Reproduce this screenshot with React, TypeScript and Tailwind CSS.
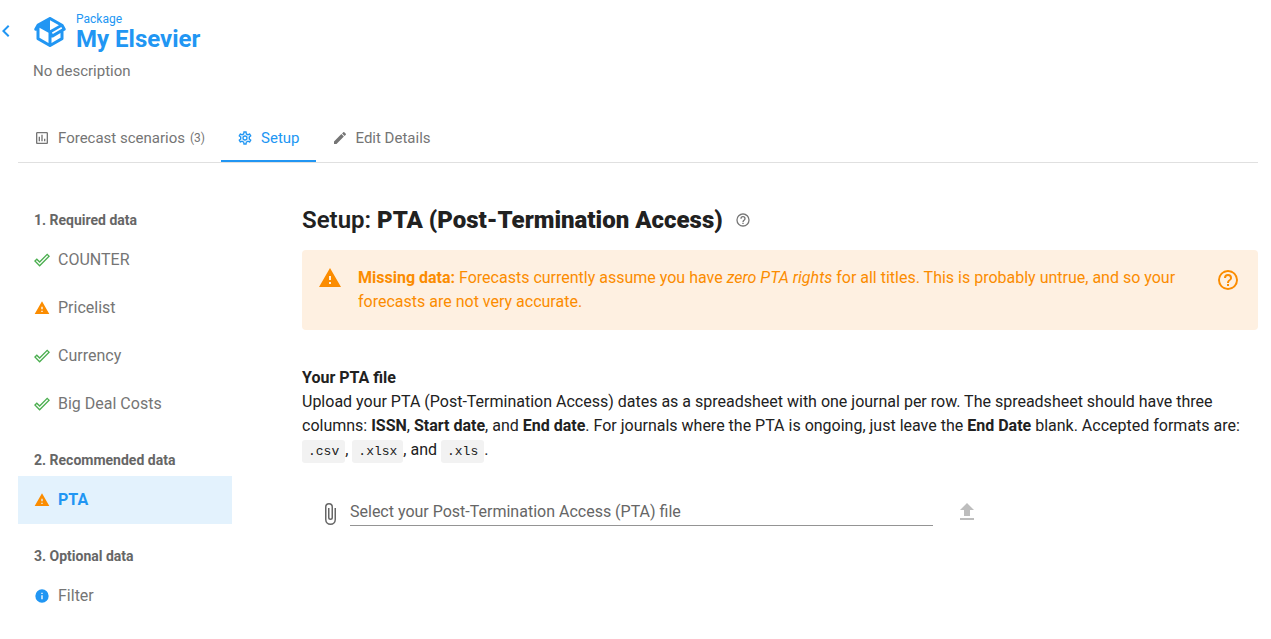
import type { ReactNode } from "react";

const icons = {
  chevronLeft: "M15.41,16.58L10.83,12L15.41,7.41L14,6L8,12L14,18L15.41,16.58Z",
  package:
    "M2,10.96C1.5,10.68 1.35,10.07 1.63,9.59L3.13,7C3.24,6.8 3.41,6.66 3.6,6.58L11.43,2.18C11.59,2.06 11.79,2 12,2C12.21,2 12.41,2.06 12.57,2.18L20.47,6.62C20.66,6.72 20.82,6.88 20.91,7.08L22.36,9.6C22.64,10.08 22.47,10.69 22,10.96L21,11.54V16.5C21,16.88 20.79,17.21 20.47,17.38L12.57,21.82C12.41,21.94 12.21,22 12,22C11.79,22 11.59,21.94 11.43,21.82L3.53,17.38C3.21,17.21 3,16.88 3,16.5V10.96C2.7,11.13 2.32,11.14 2,10.96M12,4.15V4.15L12,10.85V10.85L17.96,7.5L12,4.15M5,15.91L11,19.29V12.58L5,9.21V15.91M19,15.91V12.69L14,15.59C13.67,15.77 13.3,15.76 13,15.6V19.29L19,15.91M13.85,13.36L20.13,9.73L19.55,8.72L13.27,12.35L13.85,13.36Z",
  chart:
    "M9 17H7V10H9V17M13 17H11V7H13V17M17 17H15V13H17V17M19 19H5V5H19V19.1M19 3H5C3.9 3 3 3.9 3 5V19C3 20.1 3.9 21 5 21H19C20.1 21 21 20.1 21 19V5C21 3.9 20.1 3 19 3Z",
  cog: "M12,8A4,4 0 0,1 16,12A4,4 0 0,1 12,16A4,4 0 0,1 8,12A4,4 0 0,1 12,8M12,10A2,2 0 0,0 10,12A2,2 0 0,0 12,14A2,2 0 0,0 14,12A2,2 0 0,0 12,10M10,22C9.75,22 9.54,21.82 9.5,21.58L9.13,18.93C8.5,18.68 7.96,18.34 7.44,17.94L4.95,18.95C4.73,19.03 4.46,18.95 4.34,18.73L2.34,15.27C2.21,15.05 2.27,14.78 2.46,14.63L4.57,12.97L4.5,12L4.57,11L2.46,9.37C2.27,9.22 2.21,8.95 2.34,8.73L4.34,5.27C4.46,5.05 4.73,4.96 4.95,5.05L7.44,6.05C7.96,5.66 8.5,5.32 9.13,5.07L9.5,2.42C9.54,2.18 9.75,2 10,2H14C14.25,2 14.46,2.18 14.5,2.42L14.87,5.07C15.5,5.32 16.04,5.66 16.56,6.05L19.05,5.05C19.27,4.96 19.54,5.05 19.66,5.27L21.66,8.73C21.79,8.95 21.73,9.22 21.54,9.37L19.43,11L19.5,12L19.43,13L21.54,14.63C21.73,14.78 21.79,15.05 21.66,15.27L19.66,18.73C19.54,18.95 19.27,19.04 19.05,18.95L16.56,17.95C16.04,18.34 15.5,18.68 14.87,18.93L14.5,21.58C14.46,21.82 14.25,22 14,22H10M11.25,4L10.88,6.61C9.68,6.86 8.62,7.5 7.85,8.39L5.44,7.35L4.69,8.65L6.8,10.2C6.4,11.37 6.4,12.64 6.8,13.8L4.68,15.36L5.43,16.66L7.86,15.62C8.63,16.5 9.68,17.14 10.87,17.38L11.24,20H12.76L13.13,17.39C14.32,17.14 15.37,16.5 16.14,15.62L18.57,16.66L19.32,15.36L17.2,13.81C17.6,12.64 17.6,11.37 17.2,10.2L19.31,8.65L18.56,7.35L16.15,8.39C15.38,7.5 14.32,6.86 13.12,6.62L12.75,4H11.25Z",
  pencil:
    "M20.71,7.04C21.1,6.65 21.1,6 20.71,5.63L18.37,3.29C18,2.9 17.35,2.9 16.96,3.29L15.12,5.12L18.87,8.87M3,17.25V21H6.75L17.81,9.93L14.06,6.18L3,17.25Z",
  check:
    "M19.78,2.2L24,6.42L8.44,22L0,13.55L4.22,9.33L8.44,13.55L19.78,2.2M19.78,5L8.44,16.36L4.22,12.19L2.81,13.55L8.44,19.17L21.19,6.42L19.78,5Z",
  alert: "M13,14H11V10H13M13,18H11V16H13M1,21H23L12,2L1,21Z",
  info: "M13,9H11V7H13M13,17H11V11H13M12,2A10,10 0 0,0 2,12A10,10 0 0,0 12,22A10,10 0 0,0 22,12A10,10 0 0,0 12,2Z",
  help: "M11,18H13V16H11V18M12,2A10,10 0 0,0 2,12A10,10 0 0,0 12,22A10,10 0 0,0 22,12A10,10 0 0,0 12,2M12,20C7.59,20 4,16.41 4,12C4,7.59 7.59,4 12,4C16.41,4 20,7.59 20,12C20,16.41 16.41,20 12,20M12,6A4,4 0 0,0 8,10H10A2,2 0 0,1 12,8A2,2 0 0,1 14,10C14,12 11,11.75 11,15H13C13,12.75 16,12.5 16,10A4,4 0 0,0 12,6Z",
  paperclip:
    "M16.5,6V17.5A4,4 0 0,1 12.5,21.5A4,4 0 0,1 8.5,17.5V5A2.5,2.5 0 0,1 11,2.5A2.5,2.5 0 0,1 13.5,5V15.5A1,1 0 0,1 12.5,16.5A1,1 0 0,1 11.5,15.5V6H10V15.5A2.5,2.5 0 0,0 12.5,18A2.5,2.5 0 0,0 15,15.5V5A4,4 0 0,0 11,1A4,4 0 0,0 7,5V17.5A5.5,5.5 0 0,0 12.5,23A5.5,5.5 0 0,0 18,17.5V6H16.5Z",
  upload: "M9,16V10H5L12,3L19,10H15V16H9M5,20V18H19V20H5Z",
};

type IconName = keyof typeof icons;

function Icon({ name, className }: { name: IconName; className: string }) {
  return (
    <svg viewBox="0 0 24 24" fill="currentColor" aria-hidden="true" className={`shrink-0 ${className}`}>
      <path d={icons[name]} />
    </svg>
  );
}

function Tab({ icon, active, children }: { icon: IconName; active?: boolean; children: ReactNode }) {
  return (
    <button
      type="button"
      role="tab"
      aria-selected={!!active}
      className={`flex h-12 items-center border-b-2 px-4 pt-0.5 text-[15px] ${
        active ? "border-[#2196f3] text-[#2196f3]" : "border-transparent text-[#757575]"
      }`}
    >
      <Icon name={icon} className="mr-2 size-4" />
      {children}
    </button>
  );
}

type Item = { label: string; icon: IconName; active?: boolean };

const groups: { title: string; items: Item[] }[] = [
  {
    title: "1. Required data",
    items: [
      { label: "COUNTER", icon: "check" },
      { label: "Pricelist", icon: "alert" },
      { label: "Currency", icon: "check" },
      { label: "Big Deal Costs", icon: "check" },
    ],
  },
  { title: "2. Recommended data", items: [{ label: "PTA", icon: "alert", active: true }] },
  { title: "3. Optional data", items: [{ label: "Filter", icon: "info" }] },
];

const iconColor: Partial<Record<IconName, string>> = {
  check: "text-[#4caf50]",
  alert: "text-[#fb8c00]",
  info: "text-[#2196f3]",
};

function Code({ children }: { children: ReactNode }) {
  return (
    <code className="rounded-[3px] bg-[#f2f2f2] px-1.5 py-1 font-['Liberation_Mono',monospace] text-[13px]">
      {children}
    </code>
  );
}

export default function App() {
  return (
    <div className="min-h-screen bg-white pr-[13px] pb-4 font-[Roboto,sans-serif] text-[#212121]">
      <header className="flex">
        <a href="#packages" aria-label="Back" className="-ml-1.5 flex pt-[19px] text-[#2196f3]">
          <Icon name="chevronLeft" className="size-6" />
        </a>
        <div className="pl-3.5">
          <div className="flex pt-3 text-[#2196f3]">
            <Icon name="package" className="mt-0.5 mr-2 size-9" />
            <div>
              <div className="text-[12px] leading-[14px]">Package</div>
              <h1 className="text-2xl leading-[26px] font-bold">My Elsevier</h1>
            </div>
          </div>
          <p className="mt-2 pl-px text-[15px] leading-[22px] text-[#757575]">No description</p>
        </div>
      </header>

      <div className="pl-[18px]">
        <div role="tablist" className="mt-8 flex border-b border-[#e0e0e0]">
          <Tab icon="chart">
            Forecast scenarios <span className="ml-[5px] text-[12px]">(3)</span>
          </Tab>
          <Tab icon="cog" active>
            Setup
          </Tab>
          <Tab icon="pencil">Edit Details</Tab>
        </div>

        <div className="flex gap-[70px] pt-[25px]">
          <nav aria-label="Setup steps" className="w-[214px] shrink-0">
            {groups.map((group) => (
              <section key={group.title} className="pt-4">
                <h2 className="flex h-8 items-center px-4 text-sm font-bold text-[#666666]">{group.title}</h2>
                <ul>
                  {group.items.map((item) => (
                    <li key={item.label}>
                      <a
                        href={`#${item.label.toLowerCase().replaceAll(" ", "-")}`}
                        aria-current={item.active ? "page" : undefined}
                        className={`flex h-12 items-center gap-2 px-4 text-base ${
                          item.active ? "bg-[#e3f2fd] font-bold text-[#2196f3]" : "text-[#757575]"
                        }`}
                      >
                        <Icon name={item.icon} className={`size-4 ${iconColor[item.icon]}`} />
                        {item.label}
                      </a>
                    </li>
                  ))}
                </ul>
              </section>
            ))}
          </nav>

          <main className="min-w-0 flex-1 pt-4">
            <div className="flex h-8 items-center">
              <h2 className="text-2xl font-semibold">
                Setup: <strong className="font-black">PTA (Post-Termination Access)</strong>
              </h2>
              <button type="button" aria-label="About PTA" className="ml-3 text-[#757575]">
                <Icon name="help" className="size-4" />
              </button>
            </div>

            <div role="alert" className="mt-3.5 flex rounded bg-[#fef0e1] p-4 text-[#fb8c00]">
              <Icon name="alert" className="mr-4 size-6" />
              <p className="flex-1 text-base">
                <strong className="font-bold">Missing data:</strong> Forecasts currently assume you have{" "}
                <em>zero PTA rights</em> for all titles. This is probably untrue, and so your forecasts are not very
                accurate.
              </p>
              <button type="button" aria-label="Help" className="ml-6 flex size-7 items-center justify-center">
                <Icon name="help" className="size-6" />
              </button>
            </div>

            <section className="pt-9 text-base">
              <h3 className="font-bold">Your PTA file</h3>
              <p>
                Upload your PTA (Post-Termination Access) dates as a spreadsheet with one journal per row. The
                spreadsheet should have three columns: <b>ISSN</b>, <b>Start date</b>, and <b>End date</b>. For journals
                where the PTA is ongoing, just leave the <b>End Date</b> blank. Accepted formats are:{" "}
                <Code>.csv</Code>, <Code>.xlsx</Code>, and <Code>.xls</Code>.
              </p>
            </section>

            <div className="mt-[38px] flex pl-4">
              <label className="flex w-2/3 cursor-pointer gap-2 pr-3 text-base text-[#666666]">
                <Icon name="paperclip" className="mt-0.5 size-6" />
                <span className="flex-1 border-b border-[#949494]">Select your Post-Termination Access (PTA) file</span>
                <input type="file" accept=".csv,.xlsx,.xls" className="sr-only" />
              </label>
              <button
                type="button"
                disabled
                aria-label="Upload"
                className="ml-2.5 flex items-start text-[#bdbdbd]"
              >
                <Icon name="upload" className="size-6" />
              </button>
            </div>
          </main>
        </div>
      </div>
    </div>
  );
}
